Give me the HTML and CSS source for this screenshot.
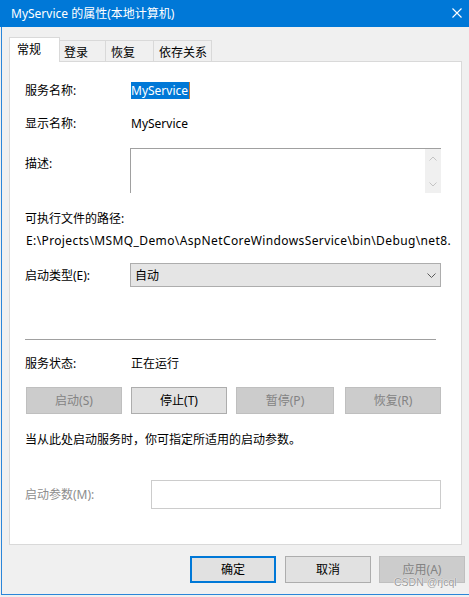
FILE: index.html
```html
<!DOCTYPE html>
<html lang="zh-CN">
<head>
<meta charset="utf-8">
<title>MyService 的属性(本地计算机)</title>
<link rel="stylesheet" href="styles.css">
</head>
<body>
<div class="app">
  <div class="titlebar">
    <span class="title">MyService 的属性(本地计算机)</span>
    <svg class="close" width="10" height="10" viewBox="0 0 10 10"><path d="M0.5 0.5 L9.5 9.5 M9.5 0.5 L0.5 9.5" stroke="#fff" stroke-width="1.1" fill="none"/></svg>
  </div>
  <div class="frame">
    <div class="tabs">
      <div class="tab active">常规</div>
      <div class="tab t2">登录</div>
      <div class="tab t3">恢复</div>
      <div class="tab t4">依存关系</div>
    </div>
    <div class="panel">
      <div class="row r1"><span class="label">服务名称:</span><span class="sel">MyService</span></div>
      <div class="row r2"><span class="label">显示名称:</span><span class="val">MyService</span></div>
      <div class="row r3">
        <span class="label top">描述:</span>
        <div class="textbox">
          <div class="scroll">
            <svg width="8" height="5" viewBox="0 0 8 5"><path d="M0.5 4.5 L4 1 L7.5 4.5" stroke="#c4c4c4" fill="none"/></svg>
            <svg width="8" height="5" viewBox="0 0 8 5"><path d="M0.5 0.5 L4 4 L7.5 0.5" stroke="#c4c4c4" fill="none"/></svg>
          </div>
        </div>
      </div>
      <div class="plain r4">可执行文件的路径:</div>
      <div class="plain path">E:\Projects\MSMQ_Demo\AspNetCoreWindowsService\bin\Debug\net8.</div>
      <div class="row r6">
        <span class="label">启动类型(E):</span>
        <div class="combo"><span>自动</span><svg width="9" height="5" viewBox="0 0 9 5"><path d="M0.5 0.5 L4.5 4.5 L8.5 0.5" stroke="#5a5a5a" fill="none"/></svg></div>
      </div>
      <div class="sep"></div>
      <div class="row r7"><span class="label">服务状态:</span><span class="val">正在运行</span></div>
      <div class="btnrow">
        <div class="btn dis">启动(S)</div>
        <div class="btn">停止(T)</div>
        <div class="btn dis wide">暂停(P)</div>
        <div class="btn dis last">恢复(R)</div>
      </div>
      <div class="plain hint">当从此处启动服务时，你可指定所适用的启动参数。</div>
      <div class="row r9">
        <span class="label lwide disabled">启动参数(M):</span>
        <div class="input"></div>
      </div>
    </div>
    <div class="footer">
      <div class="btn fbtn default">确定</div>
      <div class="btn fbtn">取消</div>
      <div class="btn fbtn dis apply">应用(A)</div>
    </div>
  </div>
  <div class="watermark">CSDN @rjcql</div>
</div>
</body>
</html>
```
FILE: styles.css
```css
* { box-sizing: border-box; }
html, body { margin: 0; padding: 0; }
body {
  background: #f0f0f0;
  font-family: "Noto Sans", "Noto Sans CJK SC", sans-serif;
  font-size: 12px;
  color: #000;
}
.app {
  position: relative;
  width: 469px;
  height: 597px;
  overflow: hidden;
  background: #f0f0f0;
}
.titlebar {
  height: 27px;
  background: #0078d7;
  display: flex;
  align-items: center;
  padding-left: 11px;
  padding-right: 7px;
}
.title {
  color: #fff;
  line-height: 27px;
  flex: 1;
}
.close { display: block; margin-top: -1px; }

.frame {
  margin-left: 1px;
  height: 568px;
  border-left: 1px solid #2b86d9;
  border-bottom: 1px solid #2b86d9;
}
.tabs {
  height: 34px;
  padding-left: 7px;
  display: flex;
  align-items: flex-end;
}
.tab {
  height: 21px;
  line-height: 17px;
  padding-top: 3px;
  border-top: 1px solid #d9d9d9;
  border-right: 1px solid #d9d9d9;
  background: #f0f0f0;
  white-space: nowrap;
}
.tab.active {
  position: relative;
  z-index: 1;
  width: 51px;
  height: 25px;
  margin-bottom: -1px;
  padding-left: 7px;
  border-left: 1px solid #d9d9d9;
  background: #fff;
}
.tab.t2 { width: 46px; padding-left: 4px; }
.tab.t3 { width: 48px; padding-left: 5px; }
.tab.t4 { width: 58px; padding-left: 5px; }

.panel {
  margin-left: 7px;
  width: 453px;
  height: 484px;
  border: 1px solid #d9d9d9;
  background: #fff;
  padding-left: 15px;
  display: flex;
  flex-direction: column;
}
.row { display: flex; align-items: center; }
.label { width: 105px; line-height: 17px; white-space: nowrap; }
.label.top { align-self: flex-start; padding-top: 7px; }
.label.lwide { width: 126px; }
.disabled { color: #8d8d8d; }
.val { line-height: 17px; padding-left: 1px; }
.sel {
  margin-left: 1px;
  height: 17px;
  line-height: 17px;
  width: 59px;
  background: #0078d7;
  color: #fff;
  border-right: 1px solid #d07a30;
  white-space: nowrap;
}
.plain { line-height: 17px; white-space: nowrap; }
.r1 { margin-top: 20px; height: 17px; }
.r2 { margin-top: 16px; height: 17px; }
.r3 { margin-top: 16px; height: 45px; align-items: flex-start; }
.r4 { margin-top: 17px; }
.path { margin-top: 5px; padding-left: 1px; letter-spacing: 0.38px; }
.r6 { margin-top: 14px; height: 24px; }
.sep { margin-top: 52px; width: 411px; height: 1px; background: #a0a0a0; }
.r7 { margin-top: 15px; height: 17px; }
.btnrow { margin-top: 15px; display: flex; padding-left: 1px; }
.hint { margin-top: 17px; }
.r9 { margin-top: 32px; height: 29px; }

.textbox {
  width: 311px;
  height: 45px;
  border-top: 1px solid #a0a0a0;
  border-left: 1px solid #a0a0a0;
  display: flex;
  justify-content: flex-end;
}
.scroll {
  width: 16px;
  height: 44px;
  background: #f0f0f0;
  display: flex;
  flex-direction: column;
  align-items: center;
  justify-content: space-between;
  padding: 7px 0 6px;
}
.scroll svg { display: block; }

.combo {
  width: 311px;
  height: 24px;
  background: #e5e5e5;
  border: 1px solid #adadad;
  display: flex;
  align-items: center;
  justify-content: space-between;
  padding: 0 4px 0 4px;
  line-height: 17px;
}
.combo svg { display: block; }

.input {
  width: 290px;
  height: 29px;
  border: 1px solid #cccccc;
  background: #fff;
}

.btn {
  width: 96px;
  height: 27px;
  background: #e1e1e1;
  border: 1px solid #adadad;
  display: flex;
  align-items: center;
  justify-content: center;
  line-height: 17px;
  white-space: nowrap;
}
.btnrow .btn + .btn { margin-left: 9px; }
.btn.wide { width: 98px; }
.btnrow .btn.last { margin-left: 11px; }
.btn.dis {
  background: #cccccc;
  border-color: #bfbfbf;
  color: #838383;
}

.footer {
  margin-top: 11px;
  display: flex;
  justify-content: flex-end;
  padding-right: 4px;
}
.fbtn { width: 86px; }
.footer .fbtn + .fbtn { margin-left: 9px; }
.footer .fbtn.apply { margin-left: 8px; }
.fbtn.default { border: 2px solid #0078d7; }

.watermark {
  position: absolute;
  left: 394px;
  top: 575px;
  font-family: "Liberation Sans", sans-serif;
  font-size: 10.5px;
  line-height: 14px;
  color: #9a9a9a;
  text-shadow: 0 0 1px #fff, 0 0 1px #fff;
  white-space: nowrap;
}
```
